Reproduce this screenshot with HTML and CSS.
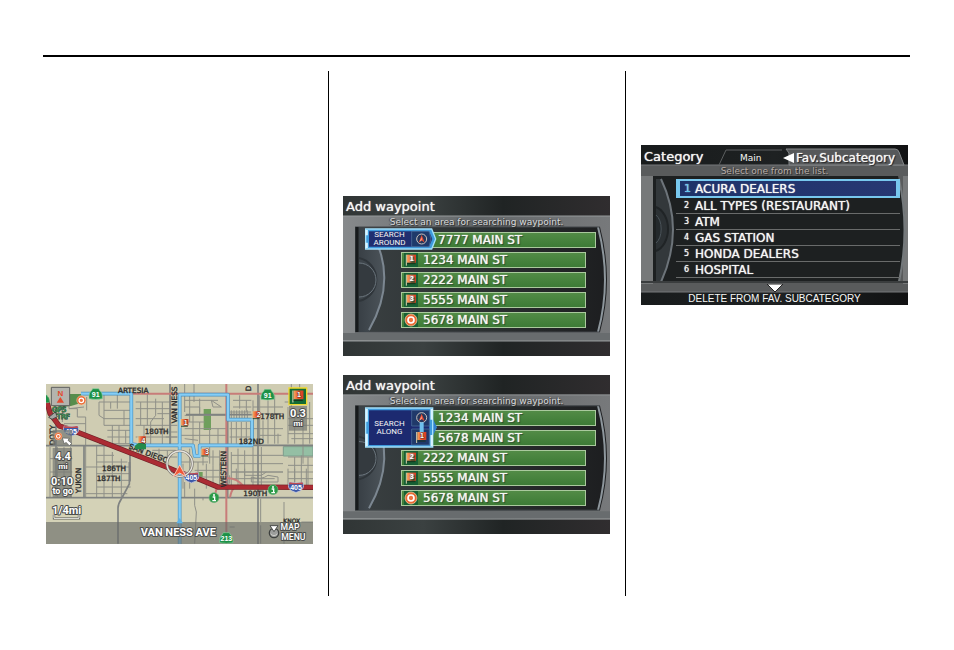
FILE: index.html
```html
<!DOCTYPE html>
<html lang="en">
<head>
<meta charset="utf-8">
<title>Waypoints</title>
<link rel="stylesheet" href="styles.css">
</head>
<body>
<svg class="defs" aria-hidden="true">
  <defs>
    <linearGradient id="dark" x1="0" x2="1"><stop offset="0" stop-color="#303535"/><stop offset=".3" stop-color="#3b4141"/><stop offset=".6" stop-color="#202424"/><stop offset="1" stop-color="#302d2f"/></linearGradient>
    <linearGradient id="bezel" x1="0" x2="1"><stop offset="0" stop-color="#878a8c"/><stop offset=".5" stop-color="#64686a"/><stop offset="1" stop-color="#77797b"/></linearGradient>
    <linearGradient id="recess" x1="0" x2="1"><stop offset="0" stop-color="#3a4042"/><stop offset=".5" stop-color="#2b3031"/><stop offset="1" stop-color="#1d1e20"/></linearGradient>
    <linearGradient id="wheel" x1="0" x2="1"><stop offset="0" stop-color="#394046"/><stop offset="1" stop-color="#4c545a"/></linearGradient>
    <linearGradient id="black" x1="0" x2="1"><stop offset="0" stop-color="#181b1c"/><stop offset=".5" stop-color="#1e2122"/><stop offset="1" stop-color="#111213"/></linearGradient>
    <linearGradient id="flagfill" x1="0" x2="1"><stop offset="0" stop-color="#f6a860"/><stop offset=".5" stop-color="#e8542c"/><stop offset="1" stop-color="#d93c22"/></linearGradient>
    <symbol id="flag" viewBox="0 0 42 42">
      <path d="M7 5V38" stroke="#d8d2b0" stroke-width="3"/>
      <path d="M9 5H36V29H9Z" fill="url(#flagfill)"/>
      <path d="M9 32H34" stroke="#17351d" stroke-width="3"/>
    </symbol>
    <symbol id="goal" viewBox="0 0 42 42">
      <circle cx="21" cy="21" r="18" fill="#e96a35" stroke="#ffd9b4" stroke-width="2"/>
      <circle cx="21" cy="21" r="9" fill="#ef7440" stroke="#fff" stroke-width="5"/>
    </symbol>
    <symbol id="car" viewBox="0 0 42 42">
      <circle cx="21" cy="21" r="15" fill="#26375c" stroke="#c9c4c0" stroke-width="3"/>
      <path d="M21 9L30 32L21 25L12 32Z" fill="#e84a32"/><path d="M21 15V25L15 29Z" fill="#ffb09a"/>
    </symbol>
    <symbol id="interstate" viewBox="0 0 42 30">
      <path d="M4 3Q21 7 38 3Q47 22 21 29Q-5 22 4 3Z" fill="#3c58a8" stroke="#c8cbdc" stroke-width="2"/>
      <path d="M5 3Q21 7 37 3L39 8H3Z" fill="#c04a50"/>
    </symbol>
    <symbol id="stateroute" viewBox="0 0 44 36">
      <path d="M13 2H31L35 9Q43 14 42 32Q22 36 2 32Q1 14 9 9Z" fill="#1d9147" stroke="#8ad09c" stroke-width="2"/>
    </symbol>
    <symbol id="info" viewBox="0 0 34 34">
      <circle cx="17" cy="17" r="15" fill="#2a9a46" stroke="#77b583" stroke-width="2"/>
      <circle cx="17" cy="9" r="3" fill="#fff"/><path d="M13 15H19V26M12 26H23" stroke="#fff" stroke-width="4" fill="none"/>
    </symbol>
  </defs>
</svg>

<header class="rule"></header>
<main class="columns">
  <section class="column column-map">
    <svg class="map" viewBox="0 0 801 480" role="img" aria-label="Route map">
      <rect width="801" height="480" fill="#cfccb2"/>
      <path d="M0 336H801V480H0Z" fill="#d4d2b7"/>
      <path d="M473 75H495V138H473Z" fill="#6f9f5c"/>
      <path d="M45 30H105L112 55L75 66L40 70Z" fill="#568d4c"/>
      <path d="M712 188H801V216H712Z" fill="#94bfa4" stroke="#7d9d8d" stroke-width="3"/>
      <path d="M457 264H470V280H457Z" fill="#6f9f5c"/>

      <g class="street" transform="translate(-6 -6)">
        <path d="M75 50V80H100V105M75 80L120 75M128 45V85M55 60V120M100 105H125V190M60 125H125M180 35V130M165 60H262M180 85H262M165 60V100L180 110H262M200 60V80M220 35V80M240 85V130M180 130H262M205 130V185M190 145H262M190 165H262M225 130V185M245 145V185M165 185H262"/>
        <path d="M275 60H400M275 80H400M290 60V130M310 35V130M335 50V100L320 120V190M355 60V190M380 40V190M275 110H360M275 130H400M340 95H400M335 150H400M365 165H400M300 130V165M275 165H400M345 200V240M370 205V240M325 205H395M290 190V215M345 225H400"/>
        <path d="M125 190V345M158 190V250M180 190V345M205 210V345M232 230V345M258 240V300M158 220H210M158 240H250M125 255H260M158 275H260M158 295H260M158 315H260M125 335H250M158 250V345"/>
        <path d="M18 195V345M40 195V345M60 195V345M80 195V345M18 230H85M18 270H85M18 305H85"/>
      </g>
      <g class="street" transform="translate(396 -6)">
        <path d="M20 5V90M48 5V60M20 55H120M20 75H65V90M65 50V100M20 100H145M35 40V120M100 55L105 75H130ZM165 55H220M165 75H220M185 40V80M205 55V90M160 85V110M168 85V110M176 85V110M184 85V110M192 85V110M200 85V110M208 85V110M155 90H220"/>
        <path d="M10 120H80M20 140H145M45 100V185M65 120V185M95 140V245M120 140V185M10 160H145M160 120V185M175 120V185M190 120V185M205 120V185M155 140H220M155 165H220M20 170L60 175M10 240H90M75 210V250M105 205V250M125 205V250M90 225H145M160 210V320M180 200V320M200 205V315M225 195V320M250 195V320M160 220H315M160 245H315M160 270H315M160 290H290"/>
        <path d="M225 55V185M245 40V185M270 55V185M290 40V185M225 75H315M235 95H315M225 140H315M245 160H310M255 115V185M300 155V185M330 75V185M350 90V185M375 90V245M395 60V185M330 110H405M330 130H405M330 155H405M340 170H405M330 225H405M350 225V320M370 220V320M390 225V320M330 250H405M330 270H405M330 290H405M340 5V75M365 5V45M320 60H385"/>
        <path d="M15 245V320M35 200V320M60 240V300M85 245V320M105 250V310M125 245V310M15 285H145M50 265H140"/>
      </g>
      <g class="street" transform="translate(396 234)">
        <path d="M160 30H315M175 20V55M200 20V40H250L265 30M220 45Q250 55 270 40L300 45V60H220ZM330 20V70M350 20V65M385 20V70M20 60V105M50 80V130L55 150L50 245M248 110V180M75 105V115M155 195H170M248 190V245M318 120V245M155 40V65M370 180H405"/>
      </g>
      <path class="avenue" d="M0 185H250M0 341H801M636 0V480M30 70V336M114 184V341M252 184V290M372 0V184M216 479V372Q216 360 226 345L250 300V234M618 184H801M420 92H636M545 110V340"/>
      <path class="arterial" d="M105 29H801M541 0V480M541 308L512 310L507 335V350M541 283Q570 280 592 306M592 306Q560 296 552 340"/>
      <path d="M0 42L12 88L40 126L75 137L364 250L396 264L456 284L516 309L801 310" fill="none" stroke="#6f2228" stroke-width="16" stroke-linejoin="round"/>
      <path d="M0 42L12 88L40 126L75 137L364 250L396 264L456 284L516 309L801 310" fill="none" stroke="#ab2b33" stroke-width="12" stroke-linejoin="round"/>
      <path class="route-edge" d="M105 29H256V180L282 184H441L446 216H461V184H618V107H546V32H401V480"/>
      <path class="route" d="M105 29H256V180L282 184H441L446 216H461V184H618V107H546V32H401V480"/>

      <g class="place">
        <text x="216" y="27">ARTESIA</text>
        <text x="296" y="151">180TH</text>
        <text x="168" y="261">186TH</text>
        <text x="152" y="291">187TH</text>
        <text x="643" y="104">178TH</text>
        <text x="578" y="180">182ND</text>
        <text x="592" y="336">190TH</text>
        <text class="minor" x="712" y="416">KNOX</text>
        <text transform="translate(394 118) rotate(-90)">VAN NESS</text>
        <text transform="translate(26 184) rotate(-90)">DOTY</text>
        <text transform="translate(106 328) rotate(-90)">YUKON</text>
        <text transform="translate(540 310) rotate(-90)">WESTERN</text>
        <text transform="translate(616 22) rotate(-90)">D</text>
        <text transform="translate(247 193) rotate(21)">SAN DIEGO</text>
      </g>

      <use href="#stateroute" x="127" y="12" width="44" height="36"/>
      <use href="#stateroute" x="643" y="14" width="44" height="36"/>
      <use href="#stateroute" x="-20" y="30" width="32" height="30"/>
      <use href="#interstate" x="50" y="122" width="50" height="36"/>
      <use href="#interstate" x="411" y="262" width="50" height="36"/>
      <use href="#interstate" x="725" y="291" width="50" height="36"/>
      <g class="shield">
        <text x="149" y="40">91</text><text x="665" y="42">91</text>
        <text x="75" y="149">405</text><text x="436" y="289">405</text><text x="750" y="318">405</text>
      </g>
      <use href="#info" x="487" y="324" width="34" height="34"/>
      <use href="#info" x="664" y="300" width="34" height="34"/>
      <use href="#flag" x="398" y="101" width="34" height="34"/>
      <use href="#flag" x="613" y="78" width="34" height="34"/>
      <use href="#flag" x="459" y="190" width="34" height="34"/>
      <use href="#flag" x="270" y="153" width="34" height="34"/>
      <path d="M266 186L276 178L300 180V196H268Z" fill="#238b4b"/>
      <g class="pin"><text x="419" y="122">1</text><text x="638" y="99">2</text><text x="483" y="211">3</text><text x="292" y="176">4</text></g>
      <use href="#goal" x="90" y="33" width="32" height="32"/>

      <circle cx="401" cy="239" r="38" fill="none" stroke="#77736e" stroke-width="8"/>
      <circle cx="401" cy="239" r="38" fill="none" stroke="#e6e4de" stroke-width="4"/>
      <path d="M401 243L420 278L401 267L382 278Z" fill="#ef5638" stroke="#f8c6b2" stroke-width="3"/>

      <g fill="#777a75" fill-opacity=".72">
        <path d="M20 192H78V280H20ZM20 282H78V342H20Z"/>
        <path d="M729 66H783V140H729Z"/><path d="M20 138H78V184H20Z"/>
      </g>
      <path d="M16 10H71V65H16Z" fill="#b4b4ae" stroke="#5e605e" stroke-width="3"/>
      <path d="M43 39L54 56H32Z" fill="#e2492e"/>
      <text class="north" x="43" y="35">N</text>
      <path d="M8 100L28 84L34 98L18 106Z" fill="#a5a7a5" stroke="#4c504d" stroke-width="3"/>
      <g class="gps"><text x="18" y="84">GPS</text><text x="32" y="106">TRF</text></g>
      <use href="#goal" x="24" y="144" width="26" height="26"/>
      <path d="M49 162L70 163L66 169L77 178L70 185L60 175L55 180Z" fill="#fff" stroke="#565854" stroke-width="2"/>
      <path d="M729 12H782V62H729Z" fill="#126b35" stroke="#eed72c" stroke-width="4"/>
      <use href="#flag" x="733" y="14" width="46" height="46"/>
      <text class="flag-number" x="759" y="39">1</text>

      <path d="M0 414H801V480H0Z" fill="#686b68" fill-opacity=".64"/>
      <path d="M401 402L411 418H391Z" fill="#5fb2e6"/>
      <use href="#stateroute" x="519" y="444" width="44" height="36"/>
      <g class="shield"><text x="541" y="472">213</text></g>
      <g class="readout">
        <text class="large" x="51" y="228">4.4</text><text x="51" y="256">mi</text>
        <text class="large" x="48" y="302">0:10</text><text class="togo" x="50" y="330">to go</text>
        <text class="large" x="62" y="391">1/4mi</text>
        <text class="large" x="756" y="98">0.3</text><text x="756" y="126">mi</text>
        <text class="street-name" x="397" y="456">VAN NESS AVE</text>
        <text class="command" x="732" y="438">MAP</text>
        <text class="command" x="742" y="468">MENU</text>
      </g>
      <path d="M24 392V403H99V392" fill="none" stroke="#60625c" stroke-width="7"/>
      <path d="M24 392V403H99V392" fill="none" stroke="#f2f2ec" stroke-width="3"/>
      <circle cx="684" cy="447" r="14" fill="#9c9e9c" stroke="#3d403e" stroke-width="4"/>
      <path d="M672 425H696L684 443Z" fill="#fff" stroke="#4a4d4a" stroke-width="3"/>
      <path d="M674 449Q684 461 694 449" stroke="#e4e4e0" stroke-width="2" fill="none"/>
    </svg>
  </section>

  <section class="column column-waypoints">
    <article class="screen">
      <svg class="backdrop" viewBox="0 0 267 160" preserveAspectRatio="none" aria-hidden="true">
        <path d="M0 0H267V160H0Z" fill="url(#dark)"/>
        <path d="M0 20H267V145H0Z" fill="url(#bezel)"/>
        <path d="M0 20H267M0 145H267" stroke="#969a9b"/>
        <path d="M0 137H267V144H0Z" fill="#686c6e"/>
        <path d="M12 31H257Q271 84 257 136H12Z" fill="url(#recess)"/>
        <path d="M255 31Q269 84 255 136" fill="none" stroke="#8d969c" stroke-width="2"/>
        <path d="M12 31H257M12 136H257" stroke="#42474a"/>
        <path d="M16 32H26Q57 84 26 136H16Z" fill="url(#wheel)"/>
        <path d="M29 36Q55 84 26 134" fill="none" stroke="#7c8791" stroke-width="2"/>
        <path d="M16 62A22 22 0 0 1 16 105" fill="#3d444a" stroke="#2f353a" stroke-width="2"/>
        <path d="M16 67A17 17 0 0 1 16 101" fill="#343a3f" stroke="#6b757d"/>
        <path d="M14 31V136" stroke="#171a1c" stroke-width="3"/>
      </svg>
      <h2 class="title">Add waypoint</h2>
      <p class="hint">Select an area for searching waypoint.</p>
      <div class="picker">
        <ul class="stops">
          <li class="stop-wide"><button class="stop">7777 MAIN ST</button></li>
          <li><button class="stop"><svg class="icon" viewBox="0 0 42 42"><use href="#flag"/><text x="23" y="23">1</text></svg>1234 MAIN ST</button></li>
          <li><button class="stop"><svg class="icon" viewBox="0 0 42 42"><use href="#flag"/><text x="23" y="23">2</text></svg>2222 MAIN ST</button></li>
          <li><button class="stop"><svg class="icon" viewBox="0 0 42 42"><use href="#flag"/><text x="23" y="23">3</text></svg>5555 MAIN ST</button></li>
          <li><button class="stop"><svg class="icon" viewBox="0 0 42 42"><use href="#goal"/></svg>5678 MAIN ST</button></li>
        </ul>
        <button class="callout callout-around">
          <svg class="callout-shape" viewBox="0 0 216 66" aria-hidden="true">
            <path d="M2 3H200L212 33L200 63H2Z" fill="#3e9bdd"/>
            <path d="M12 10H192L202 33L192 56H12Z" fill="#202f70"/>
            <path d="M2 3H200L212 33L200 63H2Z" fill="none" stroke="#a3e0fa" stroke-width="4"/>
            <path d="M5 6V22M5 44V60" stroke="#d9f4ff" stroke-width="7"/>
            <path d="M140 10H192L198 33L192 56H140Z" fill="#1e3a6b" stroke="#5378a5" stroke-width="2"/>
            <use href="#car" x="149" y="12" width="42" height="42"/>
          </svg>
          <span class="callout-label">SEARCH<br>AROUND</span>
        </button>
      </div>
    </article>

    <article class="screen">
      <svg class="backdrop" viewBox="0 0 267 160" preserveAspectRatio="none" aria-hidden="true">
        <path d="M0 0H267V160H0Z" fill="url(#dark)"/>
        <path d="M0 20H267V145H0Z" fill="url(#bezel)"/>
        <path d="M0 20H267M0 145H267" stroke="#969a9b"/>
        <path d="M0 137H267V144H0Z" fill="#686c6e"/>
        <path d="M12 31H257Q271 84 257 136H12Z" fill="url(#recess)"/>
        <path d="M255 31Q269 84 255 136" fill="none" stroke="#8d969c" stroke-width="2"/>
        <path d="M12 31H257M12 136H257" stroke="#42474a"/>
        <path d="M16 32H26Q57 84 26 136H16Z" fill="url(#wheel)"/>
        <path d="M29 36Q55 84 26 134" fill="none" stroke="#7c8791" stroke-width="2"/>
        <path d="M16 62A22 22 0 0 1 16 105" fill="#3d444a" stroke="#2f353a" stroke-width="2"/>
        <path d="M16 67A17 17 0 0 1 16 101" fill="#343a3f" stroke="#6b757d"/>
        <path d="M14 31V136" stroke="#171a1c" stroke-width="3"/>
      </svg>
      <h2 class="title">Add waypoint</h2>
      <p class="hint">Select an area for searching waypoint.</p>
      <div class="picker picker-along">
        <ul class="stops">
          <li class="stop-wide"><button class="stop">1234 MAIN ST</button></li>
          <li class="stop-wide"><button class="stop">5678 MAIN ST</button></li>
          <li><button class="stop"><svg class="icon" viewBox="0 0 42 42"><use href="#flag"/><text x="23" y="23">2</text></svg>2222 MAIN ST</button></li>
          <li><button class="stop"><svg class="icon" viewBox="0 0 42 42"><use href="#flag"/><text x="23" y="23">3</text></svg>5555 MAIN ST</button></li>
          <li><button class="stop"><svg class="icon" viewBox="0 0 42 42"><use href="#goal"/></svg>5678 MAIN ST</button></li>
        </ul>
        <button class="callout callout-along">
          <svg class="callout-shape" viewBox="0 0 216 123" aria-hidden="true">
            <path d="M202 32L216 61L202 90Z" fill="#2f80cc"/>
            <path d="M2 3H203V120H2Z" fill="#3e9bdd"/>
            <path d="M12 10H193V114H12Z" fill="#1c2a70"/>
            <path d="M140 10H193V57H140ZM140 66H193V114H140Z" fill="#20396a" stroke="#5378a5" stroke-width="2"/>
            <path d="M2 3H203V120H2Z" fill="none" stroke="#a3e0fa" stroke-width="4"/>
            <path d="M5 6V44M5 80V118M200 6V38M200 84V118" stroke="#d9f4ff" stroke-width="7"/>
            <use href="#car" x="149" y="11" width="42" height="42"/>
            <use href="#flag" x="148" y="70" width="42" height="42"/>
            <path d="M170 46V76" stroke="#6fc0ee" stroke-width="12"/>
            <text class="flag-number" x="171" y="94">1</text>
          </svg>
          <span class="callout-label">SEARCH<br>ALONG</span>
        </button>
      </div>
    </article>
  </section>

  <section class="column column-category">
    <article class="screen screen-category">
      <svg class="backdrop" viewBox="0 0 267 160" preserveAspectRatio="none" aria-hidden="true">
        <path d="M0 0H267V160H0Z" fill="url(#black)"/>
        <path d="M0 20H267V147H0Z" fill="#595b5c"/>
        <path d="M0 31H12V139H0ZM262 31H267V139H262Z" fill="#77797a"/>
        <path d="M0 20H267M0 147H267" stroke="#77797a"/>
        <path d="M78 20L85 5H141" fill="none" stroke="#5c5f60"/>
        <path d="M148 20V8L145 4H254Q257 4 258 7L263 20Z" fill="#56585a" stroke="#85888a"/>
        <path d="M12 31H257Q271 84 257 137H12Z" fill="#1d2021"/>
        <path d="M258 34Q269 84 258 137" fill="none" stroke="#74797c" stroke-width="2"/>
        <path d="M15 34H20Q44 84 20 137H15Z" fill="#33383b"/>
        <path d="M20 34Q44 84 20 137" fill="none" stroke="#6d747a" stroke-width="2"/>
        <path d="M15 62A17 23 0 0 1 15 106" fill="#2c3134" stroke="#202426" stroke-width="2"/>
        <path d="M15 70A10 16 0 0 1 15 98" fill="#24292c" stroke="#4b545a"/>
        <path d="M0 137H267" stroke="#3a3d3e" stroke-width="2"/>
      </svg>
      <div class="category-head">
        <h2 class="title">Category</h2>
        <button class="tab">Main</button>
        <svg class="tab-arrow" viewBox="0 0 11 10" aria-hidden="true"><path d="M0 5L11 0V10Z" fill="#fff"/></svg>
        <button class="tab tab-current">Fav.Subcategory</button>
      </div>
      <p class="hint hint-category">Select one from the list.</p>
      <ol class="categories">
        <li><button class="category category-current"><span class="number">1</span>ACURA DEALERS</button></li>
        <li><button class="category"><span class="number">2</span>ALL TYPES (RESTAURANT)</button></li>
        <li><button class="category"><span class="number">3</span>ATM</button></li>
        <li><button class="category"><span class="number">4</span>GAS STATION</button></li>
        <li><button class="category"><span class="number">5</span>HONDA DEALERS</button></li>
        <li><button class="category"><span class="number">6</span>HOSPITAL</button></li>
      </ol>
      <svg class="more" viewBox="0 0 18 8" aria-hidden="true"><path d="M1 0H17L9 8Z" fill="#fff" stroke="#222"/></svg>
      <button class="delete">DELETE FROM FAV. SUBCATEGORY</button>
    </article>
  </section>
</main>
</body>
</html>
```
FILE: styles.css
```css
* {
  box-sizing: border-box;
}

body {
  display: flex;
  flex-direction: column;
  min-height: 100vh;
  margin: 0;
  padding: 55px 44px 54px 43px;
  background: #fff;
  font-family: "DejaVu Sans", sans-serif;
}

button {
  margin: 0;
  padding: 0;
  border: 0;
  background: none;
  color: inherit;
  font: inherit;
  text-align: left;
  white-space: nowrap;
}

h2,
p,
ul,
ol {
  margin: 0;
  padding: 0;
  list-style: none;
  font-weight: normal;
}

.defs {
  position: absolute;
  width: 0;
  height: 0;
}

.rule {
  border-top: 2px solid #000;
  margin-bottom: 14px;
}

/* Page columns */

.columns {
  flex: 1;
  display: grid;
  grid-template-columns: 286fr 297fr 284fr;
}

.column {
  display: flex;
  flex-direction: column;
  gap: 19px;
}

.column + .column {
  border-left: 1px solid #000;
  margin-left: -1px;
}

.column-map {
  padding: 313px 16px 0 3px;
}

.column-waypoints {
  padding: 125px 16px 0 14px;
}

.column-category {
  padding: 74px 2px 0 15px;
}

/* Map */

.map {
  display: block;
  width: 100%;
}

.street {
  fill: none;
  stroke: #8f9088;
  stroke-width: 3;
}

.avenue {
  fill: none;
  stroke: #7f8281;
  stroke-width: 5;
}

.arterial {
  fill: none;
  stroke: #c87c79;
  stroke-width: 6;
}

.route-edge,
.route {
  fill: none;
  stroke-linejoin: round;
}

.route-edge {
  stroke: #4b90bd;
  stroke-width: 11;
}

.route {
  stroke: #84cdf6;
  stroke-width: 7;
}

.place text {
  fill: #2b2b2b;
  stroke: #2b2b2b;
  stroke-width: 1;
  font-size: 22px;
}

.place .minor {
  font-size: 18px;
}

.shield text {
  fill: #fff;
  font: bold 21px "Liberation Sans", sans-serif;
  text-anchor: middle;
}

.pin text,
.icon text,
.flag-number {
  fill: #fff;
  stroke: #70301e;
  stroke-width: 3;
  paint-order: stroke;
  font: bold 21px "Liberation Sans", sans-serif;
  text-anchor: middle;
}

.north {
  fill: #e2492e;
  font: bold 24px "Liberation Sans", sans-serif;
  text-anchor: middle;
}

.gps text {
  fill: #4aa565;
  stroke: #27402f;
  stroke-width: 3;
  paint-order: stroke;
  font-size: 21px;
}

.readout text {
  fill: #fff;
  stroke: #4c4e4c;
  stroke-width: 6;
  stroke-linejoin: round;
  paint-order: stroke;
  font: bold 24px Roboto, sans-serif;
  text-anchor: middle;
}

.readout .large,
.readout .street-name {
  font-size: 33px;
}

.readout .togo {
  font-size: 27px;
}

.readout .command {
  font-size: 26px;
  font-weight: 500;
}

/* Navigation screens */

.screen {
  position: relative;
  isolation: isolate;
  color: #f7f7f5;
}

.backdrop {
  position: absolute;
  inset: 0;
  z-index: -1;
  width: 100%;
  height: 100%;
}

.title {
  padding-left: 3px;
  font-size: 13px;
  line-height: 22px;
  height: 20px;
  text-shadow: 0 0 1px #f7f7f5;
}

.hint {
  color: #d8dadb;
  font-size: 9px;
  line-height: 12px;
  text-align: center;
  text-shadow: 1px 1px 1px #222, -1px 0 1px #444;
}

.picker {
  position: relative;
  padding: 4px 0 28px;
}

.picker-along {
  padding: 3px 0 28px;
}

.stops {
  display: grid;
  gap: 4px;
  margin: 0 24px 0 58px;
}

.stop-wide {
  margin: 0 -10px 0 30px;
}

.stop {
  display: flex;
  align-items: center;
  gap: 5px;
  width: 100%;
  height: 16px;
  padding-left: 2px;
  border: 1px solid #a9c99d;
  background: linear-gradient(#528b46, #3d7b36);
  font-size: 12px;
  line-height: 14px;
  text-shadow: 0 0 1px #f7f7f5, 1px 1px 1px #24431f;
}

.stop-wide .stop {
  padding-left: 6px;
}

.icon {
  width: 14px;
  height: 14px;
  background: #176034;
}

.callout {
  position: absolute;
  top: 0;
  left: 22px;
  width: 72px;
}

.callout-shape {
  display: block;
  width: 100%;
}

.callout-label {
  position: absolute;
  inset: 0 27px 0 4px;
  display: grid;
  place-content: center;
  font: 8px/8px Roboto, sans-serif;
  text-align: center;
}

/* Category screen */

.category-head {
  display: grid;
  grid-template-columns: 95px 43px 11px 1fr;
  align-items: center;
  column-gap: 2px;
  height: 20px;
}

.category-head .title {
  line-height: 20px;
}

.tab {
  padding-left: 2px;
  font-size: 9px;
  line-height: 20px;
  padding-top: 3px;
}

.tab-current {
  padding-left: 0;
  font-size: 12px;
  text-shadow: 0 0 1px #f7f7f5, 1px 1px 1px #111;
}

.tab-arrow {
  width: 11px;
  margin-top: 3px;
}

.hint-category {
  color: #b8aea8;
}

.categories {
  padding: 2px 8px 6px 35px;
}

.category {
  display: flex;
  align-items: center;
  width: 100%;
  height: 16px;
  padding-right: 4px;
  border-bottom: 1px solid #696b6b;
  font-size: 12px;
  text-shadow: 0 0 1px #f7f7f5;
}

.category-current {
  height: 19px;
  border: 2px solid #78c8ee;
  border-left-width: 4px;
  border-right-width: 4px;
  background: linear-gradient(90deg, #1e3269, #273873);
}

.number {
  width: 19px;
  padding-right: 6px;
  font-size: 8px;
  text-align: right;
}

.category-current .number {
  width: 15px;
  padding-right: 4px;
  color: #5cc8f2;
  font-size: 11px;
}

.more {
  display: block;
  width: 18px;
  height: 8px;
  margin: 0 auto;
}

.delete {
  display: block;
  width: 100%;
  font: 10px/13px "Liberation Sans", sans-serif;
  text-align: center;
}
```
